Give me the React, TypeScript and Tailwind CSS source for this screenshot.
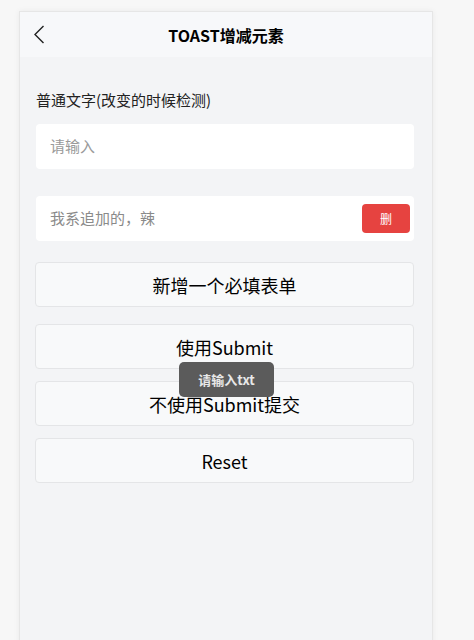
const font = { fontFamily: '"Noto Sans CJK SC", "Noto Sans", sans-serif' };

function ActionButton({ label, className = '' }: { label: string; className?: string }) {
  return (
    <button
      className={`h-[45px] w-[379px] rounded-[4px] border border-[#e4e5e7] bg-[#f8f9fa] text-[18px] leading-none text-black flex items-center justify-center ${className}`}
    >
      {label}
    </button>
  );
}

export default function App() {
  return (
    <div className="h-[640px] overflow-hidden bg-[#f7f7f7] pt-[11px] pl-[19px]" style={font}>
      <div className="relative w-[414px] h-[700px] bg-[#f3f4f6] border-l border-r border-t border-[#e6e6e6] shadow-[0_0_6px_rgba(0,0,0,0.06)]">
        {/* Header */}
        <div className="relative h-[45px] bg-[#f7f8fa] flex items-center justify-center">
          <svg className="absolute left-[13px] top-[13px]" width="12" height="19" viewBox="0 0 12 19" fill="none">
            <polyline points="10.5,1 2,9.5 10.5,18" stroke="#222" strokeWidth="1.4" strokeLinejoin="miter" />
          </svg>
          <h1 className="text-[16px] font-bold text-black">TOAST增减元素</h1>
        </div>

        {/* Body */}
        <div className="pl-[16px] pt-[33px]">
          <p className="text-[15px] leading-[20px] text-[#222]">普通文字(改变的时候检测)</p>

          <div className="mt-[14px] w-[378px] h-[45px] bg-white rounded-[4px] flex items-center pl-[14px]">
            <span className="text-[15px] text-[#9a9a9a]">请输入</span>
          </div>

          <div className="mt-[27px] w-[378px] h-[45px] bg-white rounded-[4px] flex items-center justify-between pl-[14px] pr-[4px]">
            <span className="text-[15px] text-[#8a8a8a]">我系追加的，辣</span>
            <button className="w-[48px] h-[29px] rounded-[4px] bg-[#e64340] text-white text-[12px] flex items-center justify-center">
              删
            </button>
          </div>

          <div className="flex flex-col -ml-px">
            <ActionButton label="新增一个必填表单" className="mt-[21px]" />
            <ActionButton label="使用Submit" className="mt-[17px]" />
            <ActionButton label="不使用Submit提交" className="mt-[12px]" />
            <ActionButton label="Reset" className="mt-[12px]" />
          </div>
        </div>

        {/* Toast */}
        <div className="absolute left-[159px] top-[350px] w-[95px] h-[35px] rounded-[5px] bg-[#5b5b5b] flex items-center justify-center">
          <span className="text-[13px] font-bold text-[#e8e8e8]">请输入txt</span>
        </div>
      </div>
    </div>
  );
}
